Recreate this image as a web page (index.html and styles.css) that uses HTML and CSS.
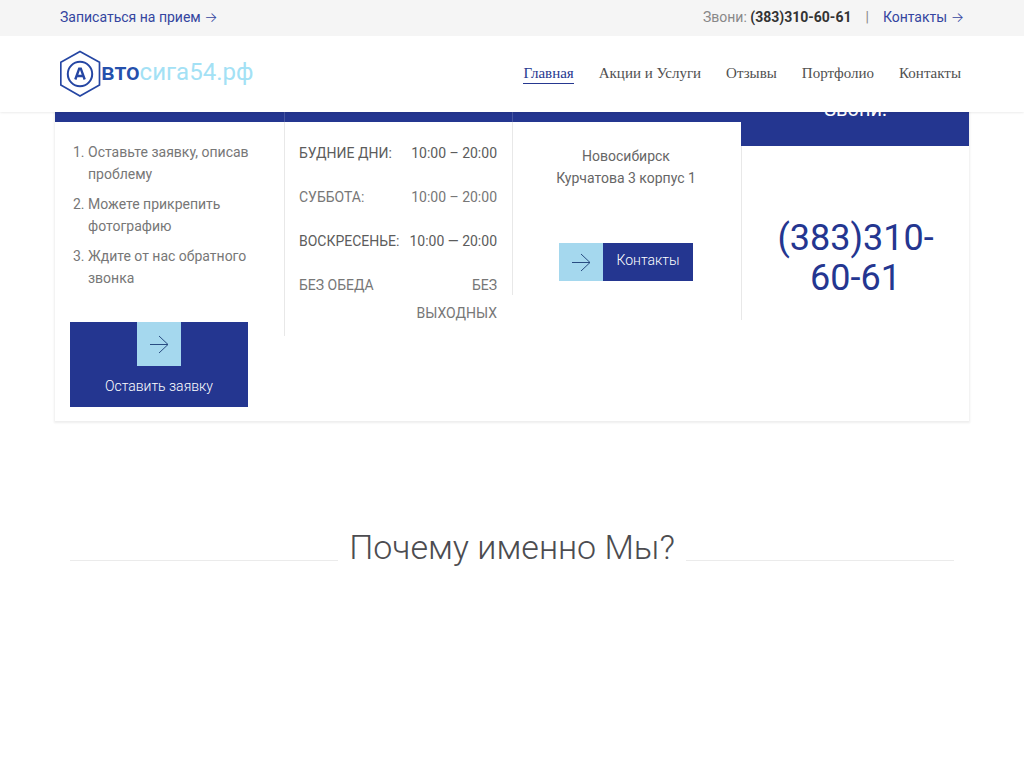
FILE: index.html
```html
<!DOCTYPE html>
<html lang="ru">
<head>
<meta charset="utf-8">
<meta name="viewport" content="width=device-width, initial-scale=1">
<title>Автосига54.рф</title>
<link rel="stylesheet" href="styles.css">
</head>
<body>
<header class="site-header">
  <div class="topbar">
    <div class="container topbar-row">
      <a href="#request">Записаться на прием <span class="arrow">→</span></a>
      <div class="topbar-contact">
        <span>Звони: <strong>(383)310-60-61</strong></span>
        <span>|</span>
        <a href="#contacts">Контакты <span class="arrow">→</span></a>
      </div>
    </div>
  </div>
  <div class="mainbar">
    <div class="container mainbar-row">
      <a class="logo" href="#" aria-label="Автосига54.рф">
        <svg class="logo-mark" viewBox="0 0 41 48" width="41" height="48" fill="none" stroke="#2546a3">
          <path d="M20 1.5 39.5 12.3v22.6L20 46 .8 34.9V12.3z" stroke-width="1.7"/>
          <circle cx="20" cy="24" r="12.2" stroke-width="2"/>
          <path d="M15.3 29.5 19.2 18.6h1.6l3.9 10.9M16.7 26h6.6" stroke-width="2.4"/>
        </svg>
        <span class="logo-text"><b>вто</b>сига54.рф</span>
      </a>
      <nav class="menu">
        <a class="active" href="#">Главная</a>
        <a href="#services">Акции и Услуги</a>
        <a href="#reviews">Отзывы</a>
        <a href="#portfolio">Портфолио</a>
        <a href="#contacts">Контакты</a>
      </nav>
    </div>
  </div>
</header>
<main>
  <section class="card">
    <div class="column">
      <div class="band"></div>
      <div class="body request" id="request">
        <ol class="steps">
          <li>Оставьте заявку, описав проблему</li>
          <li>Можете прикрепить фотографию</li>
          <li>Ждите от нас обратного звонка</li>
        </ol>
        <a class="button button-stacked" href="#request">
          <span class="button-icon"><svg viewBox="0 0 20 20" width="20" height="20"><path d="M1 10.500h18M10 2l9 8.500-9 8.500"/></svg></span>
          <span class="button-label">Оставить заявку</span>
        </a>
      </div>
    </div>
    <div class="column">
      <div class="band"></div>
      <dl class="body hours">
        <div class="strong"><dt>Будние дни:</dt><dd>10:00 – 20:00</dd></div>
        <div><dt>Суббота:</dt><dd>10:00 – 20:00</dd></div>
        <div class="strong"><dt>Воскресенье:</dt><dd>10:00 — 20:00</dd></div>
        <div><dt>Без обеда</dt><dd>Без выходных</dd></div>
      </dl>
    </div>
    <div class="column">
      <div class="band"></div>
      <div class="body address" id="contacts">
        <p>Новосибирск<br>Курчатова 3 корпус 1</p>
        <a class="button" href="#contacts">
          <span class="button-icon"><svg viewBox="0 0 20 20" width="20" height="20"><path d="M1 10.500h18M10 2l9 8.500-9 8.500"/></svg></span>
          <span class="button-label">Контакты</span>
        </a>
      </div>
    </div>
    <div class="column">
      <h3 class="band band-call">Звони:</h3>
      <div class="body phone">(383)310-60-61</div>
    </div>
  </section>
  <div class="section-title"><h2>Почему именно Мы?</h2></div>
</main>
</body>
</html>
```

FILE: styles.css
```css
* { box-sizing: border-box; }
body {
  margin: 0;
  background: #fff;
  color: #777;
  font: 14px/22px Roboto, "Liberation Sans", sans-serif;
}
a { color: #3445a0; text-decoration: none; }
.site-header {
  position: relative;
  z-index: 2;
  background: #fff;
  box-shadow: 0 0 3px rgba(0, 0, 0, 0.14);
}
.container { max-width: 904px; margin: 0 auto; }
.topbar { background: #f5f5f5; }
.topbar-row {
  display: flex;
  justify-content: space-between;
  padding: 6px 0 8px;
}
.topbar-contact { display: flex; gap: 14px; color: #888; }
.topbar-contact strong { color: #333; font-weight: 700; }
.arrow { font-family: Inter, sans-serif; font-weight: 300; line-height: 1; }
.mainbar-row {
  display: flex;
  align-items: center;
  justify-content: space-between;
  height: 76px;
}
.logo { display: flex; align-items: center; }
.logo-text { color: #a3e1f5; font-size: 24px; line-height: 28px; padding-bottom: 4px; }
.logo-text b { color: #2550ac; font-weight: 500; }
.menu {
  display: flex;
  gap: 25px;
  padding: 0 3px 2px 0;
  font: 15px/20px "Liberation Serif", serif;
}
.menu a { color: #505050; border-bottom: 1px solid transparent; }
.menu .active { color: #263890; border-color: #263890; }

.card {
  display: grid;
  grid-template-columns: 229fr 228fr 229fr 228fr;
  align-items: start;
  max-width: 914px;
  margin: -29px auto 0;
  padding-bottom: 14px;
  background: #fff;
  box-shadow: 0 1px 2px 1px rgba(0, 0, 0, 0.07);
}
.column { min-width: 0; }
.column + .column { border-left: 1px solid #e8e8e8; }
.band { height: 39px; margin: 0; background: #243690; }
.column + .column .band { margin-left: -1px; border-left: 1px solid #4655a0; }
.column + .column .band-call {
  height: auto;
  padding: 14px 0 24px;
  border-color: #243690;
  color: #fff;
  font-size: 20px;
  font-weight: 400;
  line-height: 25px;
  text-align: center;
}
.body { padding: 0 15px; }
.request { padding: 19px 36px 0 15px; }
.steps { margin: 0 -20px 33px 0; padding-left: 18px; }
.steps li + li { margin-top: 8px; }
.hours {
  margin: 0;
  padding: 17px 15px 9px 14px;
  line-height: 28px;
  text-transform: uppercase;
}
.hours > div { display: flex; justify-content: space-between; gap: 8px; }
.hours > div + div { margin-top: 16px; }
.hours dt { white-space: nowrap; }
.hours dd { max-width: 90px; margin: 0; text-align: right; }
.hours .strong { color: #5c5c5c; }
.address { padding: 23px 16px 14px 14px; color: #666; text-align: center; }
.address p { margin: 0 0 54px; }
.button {
  display: inline-flex;
  background: #243690;
  color: #fff;
  font-weight: 300;
  vertical-align: top;
}
.button-icon {
  display: flex;
  align-items: center;
  justify-content: center;
  width: 44px;
  height: 38px;
  background: #a5d8ee;
}
.button-icon path { fill: none; stroke: #294d82; stroke-width: 1; }
.button-label { padding: 6px 14px 10px; }
.button-stacked { display: flex; flex-direction: column; align-items: center; }
.button-stacked .button-icon { height: 44px; }
.button-stacked .button-label { padding: 9px 14px 10px; }
.phone {
  padding: 72px 30px 22px;
  color: #243690;
  font-size: 36px;
  line-height: 40px;
  text-align: center;
}
.section-title {
  display: flex;
  align-items: center;
  gap: 11px;
  max-width: 884px;
  margin: 104px auto 0;
}
.section-title::before, .section-title::after {
  content: "";
  flex: 1;
  height: 1px;
  margin-top: 26px;
  background: #ebebeb;
}
.section-title h2 {
  margin: 0;
  color: #4c4c50;
  font-size: 34px;
  font-weight: 300;
  line-height: 44px;
}
```
